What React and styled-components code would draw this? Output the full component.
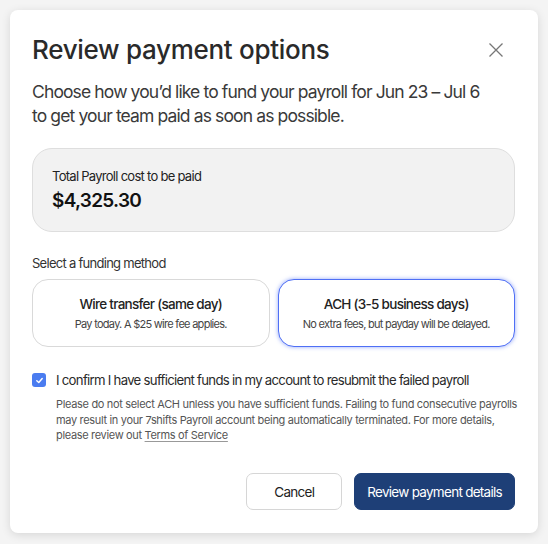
import styled, { createGlobalStyle } from "styled-components";

const GlobalStyle = createGlobalStyle`
  html, body {
    margin: 0;
    padding: 0;
    background: #f4f4f4;
    font-family: Inter, "Noto Sans", sans-serif;
  }
`;

const Page = styled.div`
  padding: 10px;
  width: 548px;
  height: 544px;
  box-sizing: border-box;
`;

const Modal = styled.div`
  width: 528px;
  height: 523px;
  box-sizing: border-box;
  background: #ffffff;
  border-radius: 8px;
  box-shadow: 0 2px 10px rgba(0, 0, 0, 0.12);
  padding: 22px 23px 23px 22px;
  display: flex;
  flex-direction: column;
  color: #2b2b2b;
  letter-spacing: -0.045em;
`;

const Header = styled.div`
  display: flex;
  align-items: center;
  justify-content: space-between;
  height: 34px;
`;

const Title = styled.h1`
  margin: 0;
  font-size: 26px;
  font-weight: 500;
  letter-spacing: -0.3px;
  color: #2a2a2a;
`;

const CloseButton = styled.button`
  border: none;
  background: none;
  padding: 0;
  margin-right: 12px;
  margin-top: 2px;
  width: 14px;
  height: 14px;
  display: flex;
  cursor: pointer;
`;

const Subtitle = styled.p`
  margin: 14px 0 0;
  font-size: 17.5px;
  line-height: 24px;
  letter-spacing: -0.05em;
  color: #3a3a3a;
`;

const Summary = styled.div`
  margin-top: 20px;
  height: 84px;
  box-sizing: border-box;
  background: #f2f2f2;
  border: 1px solid #dedede;
  border-radius: 20px;
  padding: 19px 19px;
  display: flex;
  flex-direction: column;
  gap: 5px;
`;

const SummaryLabel = styled.div`
  font-size: 13px;
  color: #222;
`;

const Amount = styled.div`
  font-size: 19px;
  font-weight: 600;
  color: #111;
`;

const SectionLabel = styled.div`
  margin-top: 23px;
  font-size: 13px;
  color: #333;
`;

const Options = styled.div`
  margin-top: 8px;
  display: grid;
  grid-template-columns: 1fr 1fr;
  gap: 8px;
`;

const Option = styled.div`
  height: 68px;
  box-sizing: border-box;
  border-radius: 16px;
  border: 1px solid ${(p) => (p.$selected ? "#4f6ff5" : "#d9d9d9")};
  box-shadow: ${(p) => (p.$selected ? "0 0 4px rgba(79, 111, 245, 0.6)" : "none")};
  display: flex;
  flex-direction: column;
  align-items: center;
  justify-content: center;
  gap: 5px;
  background: #fff;
`;

const OptionTitle = styled.div`
  font-size: 13.5px;
  font-weight: 500;
  color: #222;
`;

const OptionNote = styled.div`
  font-size: 11px;
  color: #444;
`;

const ConfirmRow = styled.label`
  margin-top: 25px;
  display: flex;
  align-items: center;
  gap: 10px;
  font-size: 13.2px;
  color: #2a2a2a;
`;

const Box = styled.span`
  width: 14px;
  height: 14px;
  flex: none;
  border-radius: 3px;
  background: #4a7cf0;
  display: flex;
  align-items: center;
  justify-content: center;
`;

const Notice = styled.p`
  margin: 9px 0 0 24px;
  font-size: 11px;
  line-height: 15.5px;
  letter-spacing: -0.03em;
  white-space: nowrap;
  color: #555;
`;

const TermsLink = styled.a`
  color: #555;
  text-decoration: underline;
  text-decoration-color: #999;
  text-underline-offset: 2px;
`;

const Footer = styled.div`
  margin-top: auto;
  display: flex;
  justify-content: flex-end;
  gap: 12px;
`;

const Button = styled.button`
  height: 37px;
  box-sizing: border-box;
  border-radius: 7px;
  font-family: inherit;
  letter-spacing: inherit;
  font-size: 13.5px;
  ${(p) => (p.$primary ? "padding: 0 12px;" : "width: 96px;")}
  border: 1px solid ${(p) => (p.$primary ? "#1e3f77" : "#d6d6d6")};
  background: ${(p) => (p.$primary ? "#1e3f77" : "#fff")};
  color: ${(p) => (p.$primary ? "#fff" : "#222")};
  cursor: pointer;
`;

export default function App() {
  return (
    <Page>
      <GlobalStyle />
      <Modal>
        <Header>
          <Title>Review payment options</Title>
          <CloseButton aria-label="Close">
            <svg width="14" height="14" viewBox="0 0 14 14">
              <path d="M0.5 0.5L13.5 13.5M13.5 0.5L0.5 13.5" stroke="#777" strokeWidth="1.3" />
            </svg>
          </CloseButton>
        </Header>
        <Subtitle>
          Choose how you’d like to fund your payroll for Jun 23 – Jul 6
          <br />
          to get your team paid as soon as possible.
        </Subtitle>
        <Summary>
          <SummaryLabel>Total Payroll cost to be paid</SummaryLabel>
          <Amount>$4,325.30</Amount>
        </Summary>
        <SectionLabel>Select a funding method</SectionLabel>
        <Options>
          <Option>
            <OptionTitle>Wire transfer (same day)</OptionTitle>
            <OptionNote>Pay today. A $25 wire fee applies.</OptionNote>
          </Option>
          <Option $selected>
            <OptionTitle>ACH (3-5 business days)</OptionTitle>
            <OptionNote>No extra fees, but payday will be delayed.</OptionNote>
          </Option>
        </Options>
        <ConfirmRow>
          <Box>
            <svg width="9" height="9" viewBox="0 0 10 10">
              <path d="M2 5.2L4.2 7.3L8 2.8" fill="none" stroke="#fff" strokeWidth="1.6" strokeLinecap="round" strokeLinejoin="round" />
            </svg>
          </Box>
          I confirm I have sufficient funds in my account to resubmit the failed payroll
        </ConfirmRow>
        <Notice>
          Please do not select ACH unless you have sufficient funds. Failing to
          fund consecutive payrolls
          <br />
          may result in your 7shifts Payroll account being automatically
          terminated. For more details,
          <br />
          please review out <TermsLink>Terms of Service</TermsLink>
        </Notice>
        <Footer>
          <Button>Cancel</Button>
          <Button $primary>Review payment details</Button>
        </Footer>
      </Modal>
    </Page>
  );
}
